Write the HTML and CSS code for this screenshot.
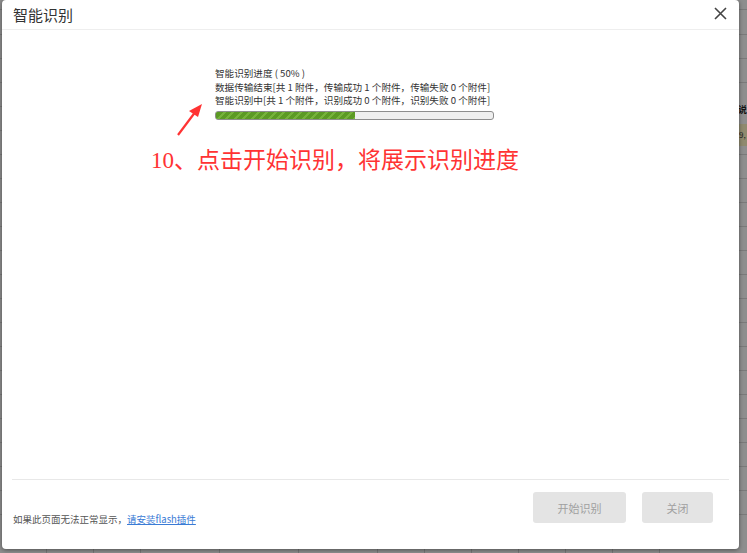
FILE: index.html
```html
<!DOCTYPE html>
<html lang="zh-CN">
  <head>
    <meta charset="UTF-8" />
    <meta name="viewport" content="width=device-width, initial-scale=1.0" />
    <title>智能识别</title>
    <link rel="stylesheet" href="styles.css">
  </head>
  <body>
    <div class="page">
      <div class="side-text">说</div>
      <div class="side-row">9,</div>
      <div class="bottom-cells">
        <span></span><span></span><span></span><span></span><span></span><span></span>
        <span></span><span></span><span></span><span></span><span></span><span></span>
      </div>
    </div>

    <div class="dialog">
      <div class="dialog-head">
        <h3>智能识别</h3>
        <span class="close">
          <svg width="13" height="13" viewBox="0 0 13 13">
            <path d="M1 1 L12 12 M12 1 L1 12" stroke="#444" stroke-width="1.6" fill="none" />
          </svg>
        </span>
      </div>

      <div class="dialog-body">
        <div class="progress-info">
          <p>智能识别进度 ( 50% )</p>
          <p>数据传输结束[共 1 附件，传输成功 1 个附件，传输失败 0 个附件]</p>
          <p>智能识别中[共 1 个附件，识别成功 0 个附件，识别失败 0 个附件]</p>
          <div class="bar"><div class="bar-fill" style="width: 50%;"></div></div>
        </div>

        <svg class="arrow" width="30" height="34" viewBox="0 0 30 34">
          <path d="M2 32 L20 8" stroke="#f33" stroke-width="2.2" fill="none" />
          <path d="M26 1 L13 8 L22 14 Z" fill="#f33" />
        </svg>

        <div class="tip">10、点击开始识别，将展示识别进度</div>
      </div>

      <div class="dialog-foot">
        <p class="notice">如果此页面无法正常显示，<a href="#">请安装flash插件</a></p>
        <div class="actions">
          <button class="btn btn-start">开始识别</button>
          <button class="btn btn-close">关闭</button>
        </div>
      </div>
    </div>
  </body>
</html>
```

FILE: styles.css
```css
* {
  margin: 0;
  padding: 0;
  box-sizing: border-box;
  font-family: "Microsoft YaHei", "Noto Sans CJK SC", sans-serif;
}
body {
  width: 747px;
  height: 553px;
  overflow: hidden;
  background-color: #8e8e8e;
  position: relative;
}

/* page behind the mask */
.page {
  height: 553px;
  background-image: repeating-linear-gradient(
    to bottom,
    transparent 0,
    transparent 23px,
    #7a7a7a 23px,
    #7a7a7a 24px
  );
  background-position: 0 11px;
  position: relative;
}
.side-text {
  position: absolute;
  left: 738px;
  top: 103px;
  font-size: 9px;
  color: #111;
  font-weight: bold;
  background: #8e8e8e;
}
.side-row {
  position: absolute;
  left: 739px;
  top: 124px;
  width: 8px;
  height: 22px;
  background: #8f8a6f;
  color: #222;
  font-size: 8px;
  line-height: 22px;
}
.bottom-cells {
  position: absolute;
  left: 0;
  right: 0;
  bottom: 0;
  height: 20px;
  display: flex;
  background: #8e8e8e;
}
.bottom-cells span {
  width: 47px;
  border-right: 1px solid #777;
}
.bottom-cells span:nth-child(4),
.bottom-cells span:nth-child(5),
.bottom-cells span:nth-child(6) {
  width: 79px;
}

/* dialog */
.dialog {
  position: absolute;
  left: 2px;
  top: 0;
  width: 737px;
  height: 549px;
  background: #fff;
  border-radius: 4px;
  box-shadow: 0 1px 4px rgba(0, 0, 0, 0.45);
  display: flex;
  flex-direction: column;
}
.dialog-head {
  height: 30px;
  border-bottom: 1px solid #eeeeee;
  display: flex;
  align-items: center;
  justify-content: space-between;
  padding: 0 12px 0 11px;
}
.dialog-head h3 {
  font-size: 15px;
  font-weight: normal;
  color: #333;
  line-height: 30px;
}
.close {
  display: flex;
  margin-top: -2px;
}

.dialog-body {
  flex: 1;
  position: relative;
  padding-top: 37px;
}
.progress-info {
  margin-left: 213px;
  width: 280px;
}
.progress-info p {
  font-size: 9.6px;
  line-height: 13.5px;
  color: #333;
  white-space: nowrap;
}
.bar {
  margin-top: 3px;
  width: 279px;
  height: 9px;
  border: 1px solid #8d8d8d;
  border-radius: 3px;
  background: #efefef;
  overflow: hidden;
}
.bar-fill {
  height: 100%;
  background-color: #5c9a24;
  background-image: repeating-linear-gradient(
    -45deg,
    #76b23a 0,
    #76b23a 2px,
    #5c9a24 2px,
    #5c9a24 6px
  );
}
.arrow {
  position: absolute;
  left: 174px;
  top: 73px;
}
.tip {
  margin: 26px 0 0 149px;
  font-size: 23px;
  line-height: 30px;
  color: #ff3333;
  font-family: "Liberation Serif", "Noto Sans CJK SC", serif;
}

.dialog-foot {
  margin: 0 10px;
  height: 70px;
  border-top: 1px solid #e8e8e8;
  display: flex;
  justify-content: space-between;
  align-items: flex-start;
  padding: 12px 16px 0 1px;
}
.notice {
  font-size: 9.5px;
  color: #555;
  margin-top: 20px;
}
.notice a {
  color: #3a7bd5;
  text-decoration: underline;
}
.actions {
  display: flex;
  gap: 16px;
}
.btn {
  height: 31px;
  border: none;
  border-radius: 3px;
  background: #e4e4e4;
  color: #a0a0a0;
  font-size: 11px;
  cursor: default;
}
.btn-start {
  width: 93px;
}
.btn-close {
  width: 71px;
}
```
